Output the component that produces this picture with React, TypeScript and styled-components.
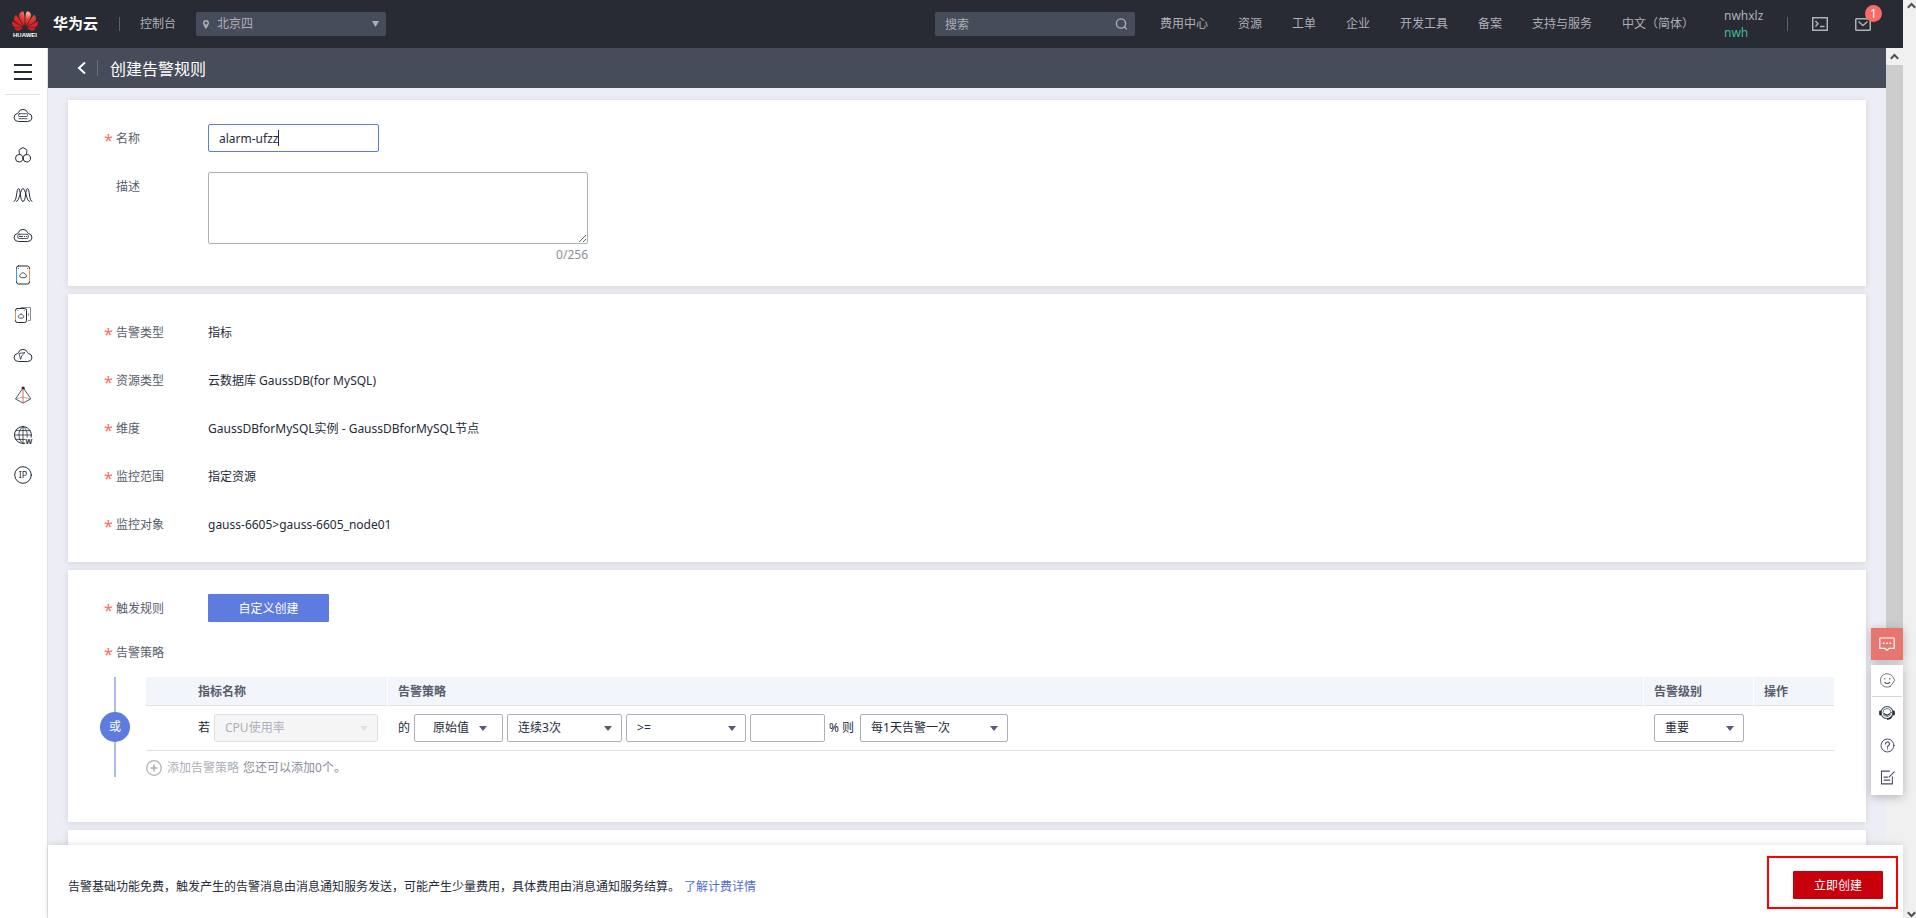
import React from "react";
import styled, { createGlobalStyle, css } from "styled-components";
import { SiHuawei } from "react-icons/si";

const GlobalStyle = createGlobalStyle`
  *, *::before, *::after { box-sizing: border-box; }
  body {
    margin: 0;
    color: #252b3a;
    font: 12px/18px "Noto Sans", "Noto Sans CJK SC", sans-serif;
  }
  button, input, select, textarea { font: inherit; color: inherit; }
  a { color: inherit; text-decoration: none; }
  svg { display: block; flex: none; }
`;

/* ---------- page frame ---------- */

const Window = styled.div`
  display: flex;
  height: 100vh;
  overflow: hidden;
`;

const Page = styled.div`
  flex: 1;
  min-width: 0;
  display: flex;
  flex-direction: column;
`;

const Body = styled.div`
  flex: 1;
  min-height: 0;
  display: flex;
`;

const Workspace = styled.div`
  flex: 1;
  min-width: 0;
  display: flex;
  flex-direction: column;
`;

const ScrollRegion = styled.div`
  flex: 1;
  min-height: 0;
  display: flex;
`;

const Content = styled.main`
  flex: 1;
  min-width: 0;
  overflow: hidden;
  background: #edeef5;
`;

const ScrollTrack = styled.div<{ $width: number }>`
  flex: none;
  width: ${(p) => p.$width}px;
  overflow: hidden;
  display: flex;
  flex-direction: column;
  align-items: flex-end;
  background: #f0f0f0;
`;

const OuterTrack = styled(ScrollTrack)`
  justify-content: space-between;
  padding-top: 2px;
`;

const ScrollArrow = styled.div`
  flex: none;
  height: 17px;
  padding: 5px 4px 0;
`;

const ScrollThumb = styled.div`
  width: 100%;
  height: 74%;
  background: #cdcdcd;
`;

const Spacer = styled.div`
  flex: 1;
`;

/* ---------- top bar ---------- */

const TopBar = styled.header`
  flex: none;
  height: 48px;
  display: flex;
  align-items: center;
  padding: 0 32px 0 12px;
  background: #282b33;
  color: #adb0b8;
`;

const Logo = styled.div`
  width: 26px;
  display: flex;
  flex-direction: column;
  align-items: center;
  padding-bottom: 4px;
`;

const LogoName = styled.span`
  height: 5px;
  margin-top: -2px;
  color: #fff;
  font: bold 6px/6px "Liberation Sans", sans-serif;
`;

const Brand = styled.strong`
  margin: 0 21px 2px 15px;
  color: #fff;
  font-size: 15px;
  line-height: 22px;
`;

const BarDivider = styled.span`
  width: 1px;
  height: 14px;
  background: #5c616e;
`;

const ConsoleLink = styled.a`
  margin: 0 20px;
`;

const DarkField = styled.label<{ $width: number }>`
  width: ${(p) => p.$width}px;
  height: 24px;
  display: flex;
  align-items: center;
  padding: 0 7px;
  border-radius: 2px;
  background: #464c59;
`;

const RegionSelect = styled.select`
  flex: 1;
  height: 24px;
  margin-left: 8px;
  padding: 0;
  border: 0;
  background: none;
  appearance: none;
  outline: none;
`;

const SearchInput = styled.input`
  flex: 1;
  min-width: 0;
  height: 24px;
  padding: 0 3px;
  border: 0;
  background: none;
  outline: none;
  &::placeholder { color: #adb0b8; opacity: 1; }
`;

const TopNav = styled.nav`
  display: flex;
  gap: 30px;
  margin: 0 30px 0 25px;
`;

const Account = styled.div`
  width: 63px;
  display: flex;
  flex-direction: column;
  line-height: 17px;
  span:last-child { color: #3dbd93; }
`;

const IconButton = styled.button`
  position: relative;
  padding: 0;
  border: 0;
  background: none;
`;

const TopActions = styled.div`
  display: flex;
  gap: 27px;
  margin-left: 24px;
`;

const Badge = styled.span`
  position: absolute;
  top: -12px;
  left: 10px;
  width: 17px;
  height: 17px;
  border-radius: 50%;
  background: #fa6b66;
  color: #fff;
  line-height: 17px;
  text-align: center;
`;

/* ---------- side bar and title bar ---------- */

const SideBar = styled.nav`
  flex: none;
  width: 48px;
  display: flex;
  flex-direction: column;
  align-items: center;
  padding-right: 2px;
  border-right: 1px solid #dfe1e6;
  background: #fff;
`;

const MenuButton = styled.button`
  width: 35px;
  height: 47px;
  display: flex;
  justify-content: center;
  padding: 15px 0 0;
  border: 0;
  border-bottom: 1px solid #dfe1e6;
  background: none;
`;

const SideLink = styled.a`
  height: 40px;
  display: flex;
  align-items: center;
`;

const TitleBar = styled.div`
  height: 40px;
  display: flex;
  align-items: center;
  padding-left: 29px;
  background: #464c59;
  color: #fff;
`;

const TitleDivider = styled.span`
  width: 1px;
  height: 16px;
  margin-left: 11px;
  background: #6b707c;
`;

const Title = styled.h1`
  margin: 0 0 0 12px;
  padding-top: 2px;
  font-size: 16px;
  font-weight: 400;
  line-height: 24px;
`;

/* ---------- form ---------- */

const Form = styled.form`
  display: flex;
  flex-direction: column;
  gap: 8px;
  padding: 12px 20px;
`;

const Card = styled.section`
  display: flex;
  flex-direction: column;
  gap: 20px;
  padding: 24px 32px;
  background: #fff;
  box-shadow: 0 1px 6px rgba(40, 43, 51, 0.14);
`;

const FieldRow = styled.div`
  display: flex;
  align-items: flex-start;
  padding-left: 4px;
`;

const labelLook = css`
  width: 104px;
  height: 28px;
  display: flex;
  padding-top: 1px;
  color: #575d6c;
  line-height: 28px;
`;

const FieldLabel = styled.label`
  ${labelLook}
`;

const FieldName = styled.span`
  ${labelLook}
`;

const Mark = styled.span`
  width: 12px;
  padding-top: 1px;
  color: #f66f6a;
  font-size: 16px;
`;

const FieldValue = styled.span`
  height: 28px;
  padding-top: 1px;
  line-height: 28px;
`;

const boxLook = css`
  height: 28px;
  border: 1px solid #adb0b8;
  border-radius: 2px;
  background: #fff;
  outline: none;
`;

const CaretField = styled.div`
  position: relative;
`;

const NameInput = styled.input`
  ${boxLook}
  display: block;
  width: 171px;
  padding: 0 10px;
  border-color: #5e7ce0;
  caret-color: transparent;
`;

const Caret = styled.span`
  position: absolute;
  top: 6px;
  left: 70px;
  width: 1px;
  height: 16px;
  background: #252b3a;
`;

const DescriptionBox = styled.div`
  width: 380px;
  display: flex;
  flex-direction: column;
`;

const Description = styled.textarea`
  ${boxLook}
  height: 72px;
  padding: 4px 10px;
  resize: both;
`;

const Counter = styled.span`
  padding-top: 2px;
  margin-bottom: -2px;
  color: #8a8e99;
  text-align: right;
`;

const PrimaryButton = styled.button<{ $tone: "blue" | "red" }>`
  width: ${(p) => (p.$tone === "blue" ? 121 : 90)}px;
  height: 28px;
  padding: 1px 0 0;
  border: 0;
  border-radius: 1px;
  background: ${(p) => (p.$tone === "blue" ? "#5e7ce0" : "#c7000b")};
  color: #fff;
`;

const PolicyTitle = styled(FieldRow)`
  margin: -4px 0 -9px;
`;

const Policy = styled.div`
  display: flex;
  gap: 16px;
  margin-bottom: 21px;
`;

const Rail = styled.div`
  flex: none;
  width: 30px;
  display: flex;
  align-items: center;
  background: linear-gradient(#adbcf0, #adbcf0) center / 2px 100% no-repeat;
`;

const RailNode = styled.span`
  width: 30px;
  border-radius: 50%;
  background: #5e7ce0;
  color: #fff;
  line-height: 30px;
  text-align: center;
`;

const PolicyMain = styled.div`
  flex: 1;
  min-width: 0;
`;

const PolicyTable = styled.table`
  width: 100%;
  table-layout: fixed;
  border-collapse: separate;
  border-spacing: 0;

  th {
    height: 29px;
    padding: 1px 0 0 10px;
    border-left: 1px solid #fff;
    border-bottom: 1px solid #dfe1e6;
    background: #f2f5fc;
    color: #575d6c;
    text-align: left;
  }
  td {
    padding: 8px 0 8px 11px;
    border-bottom: 1px solid #dfe1e6;
  }
  th:first-child {
    padding-left: 52px;
    border-left: 0;
  }
  td:first-child { padding-left: 52px; }
`;

const Col = styled.col<{ $width?: number }>`
  width: ${(p) => (p.$width ? `${p.$width}px` : "auto")};
`;

const Inline = styled.div`
  display: flex;
  align-items: center;
  gap: 4px;
`;

const Unit = styled.span`
  width: 27px;
`;

const SelectBox = styled.span<{ $width: number; $inset?: number; $disabled?: boolean }>`
  position: relative;
  width: ${(p) => p.$width}px;
  height: 28px;

  select {
    ${boxLook}
    width: 100%;
    padding: 0 20px 0 ${(p) => p.$inset ?? 10}px;
    appearance: none;
    ${(p) =>
      p.$disabled &&
      css`
        border-color: #dfe1e6;
        background: #f5f5f6;
        color: #adb0b8;
        opacity: 1;
      `}
  }
  &::after {
    content: "";
    position: absolute;
    top: 12px;
    right: ${(p) => (p.$inset ? p.$inset - 2 : 10)}px;
    border: 4px solid transparent;
    border-top: 5px solid ${(p) => (p.$disabled ? "#dfe1e6" : "#575d6c")};
    border-bottom: 0;
  }
`;

const Threshold = styled.input`
  ${boxLook}
  width: 75px;
  padding: 0 10px;
`;

const AddRow = styled.div`
  display: flex;
  align-items: center;
  padding-top: 8px;
  color: #8a8e99;
`;

const AddButton = styled.button`
  display: flex;
  align-items: center;
  gap: 5px;
  margin-right: 4px;
  padding: 0;
  border: 0;
  background: none;
  color: #adb0b8;
`;

/* ---------- footer and floating tools ---------- */

const Footer = styled.footer`
  position: relative;
  flex: none;
  height: 73px;
  display: flex;
  align-items: center;
  justify-content: space-between;
  padding: 2px 5px 0 20px;
  background: #fff;
  box-shadow: 0 -1px 6px rgba(40, 43, 51, 0.12);
`;

const Notice = styled.p`
  margin: 0;
  padding-top: 9px;
  a { margin-left: 4px; color: #526ecc; }
`;

const Highlight = styled.div`
  display: flex;
  padding: 13px 13px 8px 24px;
  border: 2px solid #f00;
`;

const FloatingTools = styled.aside`
  position: fixed;
  right: 13px;
  bottom: 123px;
  width: 32px;
  display: flex;
  flex-direction: column;
  gap: 5px;
  color: #464c59;
`;

const ToolGroup = styled.div<{ $accent?: boolean }>`
  display: flex;
  flex-direction: column;
  background: ${(p) => (p.$accent ? "#e7766f" : "#fff")};
  color: ${(p) => (p.$accent ? "#fff" : "inherit")};
  box-shadow: 0 2px 10px rgba(40, 43, 51, 0.3);
`;

const LowerTools = styled(ToolGroup)`
  padding-bottom: 2px;
`;

const Tool = styled.button<{ $ruled?: boolean }>`
  height: 32px;
  display: flex;
  align-items: center;
  justify-content: center;
  margin: 0 1px;
  padding: 0;
  border: 0;
  border-bottom: ${(p) => (p.$ruled ? "1px solid #d5d7dc" : "0")};
  background: none;
  color: inherit;
`;

/* ---------- drawings ---------- */

const Line = ({ size = 20, children }: { size?: number; children: React.ReactNode }) => (
  <svg
    width={size}
    height={size}
    viewBox="0 0 20 20"
    fill="none"
    stroke="currentColor"
    strokeWidth="1"
    strokeLinecap="round"
    strokeLinejoin="round"
    aria-hidden="true"
  >
    {children}
  </svg>
);

const Chevron = ({ down = false }: { down?: boolean }) => (
  <svg width="9" height="7" viewBox="0 0 9 7" fill="none" stroke="#505050" strokeWidth="2">
    <path d={down ? "M.8 1.2 4.5 5 8.2 1.2" : "M.8 5.8 4.5 2l3.7 3.8"} />
  </svg>
);

const cloud =
  "M5 16.500a4 4 0 0 1-.8-7.900c.6-.2.9-.4 1.100-.900A5 5 0 0 1 14.700 7.700c.2.500.5.800 1.100.900A4 4 0 0 1 15 16.500z";

const sideItems: { name: string; icon: React.ReactNode }[] = [
  {
    name: "弹性云服务器",
    icon: (
      <>
        <path d={cloud} />
        <rect x="5.5" y="8.7" width="9" height="2.8" rx="1" strokeWidth=".8" />
        <path d="M6 13.700h8" strokeWidth=".8" />
      </>
    ),
  },
  {
    name: "容器",
    icon: (
      <>
        <path d="M7.200 9.700a4 4 0 1 1 5.600 0" />
        <circle cx="6.200" cy="13.200" r="3.700" />
        <circle cx="13.800" cy="13.200" r="3.700" />
      </>
    ),
  },
  {
    name: "弹性伸缩",
    icon: (
      <>
        <path d="M1 16.500C4 16.500 3.300 3.500 5.500 3.500S7 16.500 10 16.500 12.300 3.500 14.500 3.500 16 16.500 19 16.500" />
        <path d="M3.500 16.500C6.500 16.500 7.500 3.500 10 3.500s3.500 13 6.500 13" />
      </>
    ),
  },
  {
    name: "裸金属服务器",
    icon: (
      <>
        <path d={cloud} />
        <rect x="4.700" y="9.200" width="10.600" height="4.300" rx="1.500" strokeWidth=".8" />
        <path d="M6.500 11.400h3M11.500 11.400h.2M13.300 11.400h.2" />
      </>
    ),
  },
  {
    name: "云硬盘",
    icon: (
      <>
        <rect x="3.500" y="1" width="13" height="18" rx="2" />
        <path stroke="#3d9be0" d="M3.500 4v12" />
        <path stroke="#e8964f" d="M16.500 4v12" />
        <path
          d="M7.800 12.500a1.700 1.700 0 0 1 0-3.200 2.400 2.400 0 0 1 4.500 0 1.700 1.700 0 0 1 0 3.200zM5.500 3.500h.1M14.400 3.500h.1"
          strokeWidth=".8"
        />
      </>
    ),
  },
  {
    name: "专属存储",
    icon: (
      <>
        <rect x="2.500" y="3.500" width="11" height="14" rx="1.800" />
        <path stroke="#e8964f" d="M2.500 6.500v8" />
        <path stroke="#8a8e99" d="M8 2.500h9.500v13h-2M15.500 8.500v2" />
        <path
          d="M6.200 13a1.400 1.400 0 0 1 .1-2.700 1.800 1.800 0 0 1 3.400 0 1.400 1.400 0 0 1 .1 2.700zM4.800 5.500h.1M11.200 5.500h.1"
          strokeWidth=".8"
        />
      </>
    ),
  },
  {
    name: "云服务",
    icon: (
      <>
        <path d={cloud} />
        <path d="M7.500 14 6 8.500 12 7.500 9 10.500z" strokeWidth=".8" />
      </>
    ),
  },
  {
    name: "虚拟私有云",
    icon: (
      <>
        <path d="M10 3 2.500 14 10 18l7.500-4z" strokeWidth=".8" />
        <path d="M3 14l7-2 7 2" stroke="#8a8e99" strokeWidth=".7" />
        <path d="M10 4v14" stroke="#d9703f" />
        <circle cx="10" cy="3" r="1.100" fill="currentColor" />
      </>
    ),
  },
  {
    name: "域名",
    icon: (
      <>
        <path d="M12 18.300a8.500 8.500 0 1 1 6.200-6.200" />
        <path
          d="M10 1.500v17M1.500 10h17M3 5.600h14M3 14.400h9M10 1.500C4.500 5 4.500 15 10 18.500M10 1.500c3.500 2.500 4.700 6.600 4.200 10.600"
          strokeWidth=".8"
        />
        <text x="12.500" y="18.500" fontSize="7" fontWeight="700" fill="currentColor" stroke="none">
          W
        </text>
      </>
    ),
  },
  {
    name: "弹性公网",
    icon: (
      <>
        <circle cx="10" cy="10" r="8.300" />
        <text x="10" y="13.200" fontSize="9" textAnchor="middle" fill="currentColor" stroke="none">
          IP
        </text>
      </>
    ),
  },
];

/* ---------- data ---------- */

const navLinks = ["费用中心", "资源", "工单", "企业", "开发工具", "备案", "支持与服务", "中文（简体）"];

const targetFields = [
  { label: "告警类型", value: "指标" },
  { label: "资源类型", value: "云数据库 GaussDB(for MySQL)" },
  { label: "维度", value: "GaussDBforMySQL实例 - GaussDBforMySQL节点" },
  { label: "监控范围", value: "指定资源" },
  { label: "监控对象", value: "gauss-6605>gauss-6605_node01" },
];

interface PickProps {
  label: string;
  value: string;
  width: number;
  inset?: number;
  disabled?: boolean;
}

const Pick = ({ label, value, width, inset, disabled }: PickProps) => (
  <SelectBox $width={width} $inset={inset} $disabled={disabled}>
    <select aria-label={label} disabled={disabled}>
      <option>{value}</option>
    </select>
  </SelectBox>
);

export default function App() {
  return (
    <Window>
      <GlobalStyle />
      <Page>
        <TopBar>
          <Logo>
            <svg width="0" height="0">
              <defs>
                <radialGradient id="petal" cx="0.62" cy="0.1" r="0.6">
                  <stop offset="0" stopColor="#f9b99a" />
                  <stop offset="0.5" stopColor="#e8403a" />
                  <stop offset="1" stopColor="#dc1f20" />
                </radialGradient>
              </defs>
            </svg>
            <SiHuawei size={26} fill="url(#petal)" />
            <LogoName>HUAWEI</LogoName>
          </Logo>
          <Brand>华为云</Brand>
          <BarDivider />
          <ConsoleLink href="#console">控制台</ConsoleLink>
          <DarkField $width={190}>
            <svg width="6" height="9" viewBox="0 0 6 9" fill="currentColor" fillRule="evenodd">
              <path d="M3 0a3 3 0 0 1 3 3c0 2-3 6-3 6S0 5 0 3a3 3 0 0 1 3-3zm0 1.500a1.500 1.500 0 1 0 0 3 1.500 1.500 0 0 0 0-3z" />
            </svg>
            <RegionSelect aria-label="区域">
              <option>北京四</option>
            </RegionSelect>
            <svg width="7" height="6" viewBox="0 0 7 6" fill="currentColor">
              <path d="M0 0h7L3.500 6z" />
            </svg>
          </DarkField>
          <Spacer />
          <DarkField $width={200}>
            <SearchInput type="search" placeholder="搜索" aria-label="搜索" />
            <svg width="13" height="13" viewBox="0 0 13 13" fill="none" stroke="currentColor" strokeWidth="1.4">
              <circle cx="6" cy="5.500" r="4.600" />
              <path d="m9.300 8.800 2.400 2.400" />
            </svg>
          </DarkField>
          <TopNav>
            {navLinks.map((text) => (
              <a key={text} href="#nav">
                {text}
              </a>
            ))}
          </TopNav>
          <Account>
            <span>nwhxlz</span>
            <span>nwh</span>
          </Account>
          <BarDivider />
          <TopActions>
            <IconButton type="button" aria-label="命令行">
              <svg width="16" height="14" viewBox="0 0 16 14" fill="none" stroke="currentColor" strokeWidth="1.5">
                <rect x=".75" y=".75" width="14.500" height="12.500" />
                <path d="m3.500 4 2.500 2.700L3.500 9.400M8 9.500h4.500" />
              </svg>
            </IconButton>
            <IconButton type="button" aria-label="消息">
              <svg width="16" height="14" viewBox="0 0 16 14" fill="none" stroke="currentColor" strokeWidth="1.5">
                <rect x=".75" y="1.750" width="14.500" height="11.500" rx=".8" />
                <path d="m3.500 4.500 4.500 4 4.500-4" />
              </svg>
              <Badge>1</Badge>
            </IconButton>
          </TopActions>
        </TopBar>

        <Body>
          <SideBar aria-label="服务">
            <MenuButton type="button" aria-label="菜单">
              <svg width="18" height="18" viewBox="0 0 18 18" fill="#252b3a">
                <path d="M0 1h18v2H0zM0 8h18v2H0zM0 15h18v2H0z" />
              </svg>
            </MenuButton>
            {sideItems.map((item) => (
              <SideLink key={item.name} href="#service" aria-label={item.name}>
                <Line>{item.icon}</Line>
              </SideLink>
            ))}
          </SideBar>

          <Workspace>
            <ScrollRegion>
              <Content>
                <TitleBar>
                  <IconButton type="button" aria-label="返回">
                    <svg width="9" height="14" viewBox="0 0 9 14" fill="none" stroke="#fff" strokeWidth="2">
                      <path d="M8 1.500 2 7l6 5.500" />
                    </svg>
                  </IconButton>
                  <TitleDivider />
                  <Title>创建告警规则</Title>
                </TitleBar>

                <Form>
                  <Card>
                    <FieldRow>
                      <FieldLabel htmlFor="rule-name">
                        <Mark>*</Mark>名称
                      </FieldLabel>
                      <CaretField>
                        <NameInput id="rule-name" defaultValue="alarm-ufzz" />
                        <Caret />
                      </CaretField>
                    </FieldRow>
                    <FieldRow>
                      <FieldLabel htmlFor="rule-desc">
                        <Mark />
                        描述
                      </FieldLabel>
                      <DescriptionBox>
                        <Description id="rule-desc" />
                        <Counter>0/256</Counter>
                      </DescriptionBox>
                    </FieldRow>
                  </Card>

                  <Card>
                    {targetFields.map((field) => (
                      <FieldRow key={field.label}>
                        <FieldName>
                          <Mark>*</Mark>
                          {field.label}
                        </FieldName>
                        <FieldValue>{field.value}</FieldValue>
                      </FieldRow>
                    ))}
                  </Card>

                  <Card>
                    <FieldRow>
                      <FieldName>
                        <Mark>*</Mark>触发规则
                      </FieldName>
                      <PrimaryButton type="button" $tone="blue">
                        自定义创建
                      </PrimaryButton>
                    </FieldRow>
                    <PolicyTitle>
                      <FieldName>
                        <Mark>*</Mark>告警策略
                      </FieldName>
                    </PolicyTitle>
                    <Policy>
                      <Rail>
                        <RailNode>或</RailNode>
                      </Rail>
                      <PolicyMain>
                        <PolicyTable>
                          <colgroup>
                            <Col $width={241} />
                            <Col />
                            <Col $width={110} />
                            <Col $width={81} />
                          </colgroup>
                          <thead>
                            <tr>
                              <th>指标名称</th>
                              <th>告警策略</th>
                              <th>告警级别</th>
                              <th>操作</th>
                            </tr>
                          </thead>
                          <tbody>
                            <tr>
                              <td>
                                <Inline>
                                  若
                                  <Pick label="指标名称" value="CPU使用率" width={164} disabled />
                                </Inline>
                              </td>
                              <td>
                                <Inline>
                                  的
                                  <Pick label="统计方式" value="原始值" width={89} inset={18} />
                                  <Pick label="连续次数" value="连续3次" width={115} />
                                  <Pick label="比较" value=">=" width={120} />
                                  <Threshold aria-label="阈值" />
                                  <Unit>% 则</Unit>
                                  <Pick label="告警频率" value="每1天告警一次" width={148} />
                                </Inline>
                              </td>
                              <td>
                                <Inline>
                                  <Pick label="告警级别" value="重要" width={90} />
                                </Inline>
                              </td>
                              <td />
                            </tr>
                          </tbody>
                        </PolicyTable>
                        <AddRow>
                          <AddButton type="button">
                            <svg width="16" height="16" viewBox="0 0 16 16" fill="none" stroke="currentColor">
                              <circle cx="8" cy="8" r="7.300" strokeWidth="1.300" />
                              <path d="M4.500 8h7M8 4.500v7" strokeWidth="1.600" />
                            </svg>
                            添加告警策略
                          </AddButton>
                          您还可以添加0个。
                        </AddRow>
                      </PolicyMain>
                    </Policy>
                  </Card>

                  <Card />
                </Form>
              </Content>
              <ScrollTrack $width={17}>
                <ScrollArrow>
                  <Chevron />
                </ScrollArrow>
                <ScrollThumb />
              </ScrollTrack>
            </ScrollRegion>

            <Footer>
              <Notice>
                告警基础功能免费，触发产生的告警消息由消息通知服务发送，可能产生少量费用，具体费用由消息通知服务结算。
                <a href="#billing">了解计费详情</a>
              </Notice>
              <Highlight>
                <PrimaryButton type="submit" $tone="red">
                  立即创建
                </PrimaryButton>
              </Highlight>
            </Footer>
          </Workspace>
        </Body>
      </Page>

      <OuterTrack $width={13}>
        <Chevron />
        <Chevron down />
      </OuterTrack>

      <FloatingTools aria-label="帮助工具">
        <ToolGroup $accent>
          <Tool type="button" aria-label="咨询">
            <Line size={16}>
              <path d="M1 2.500h18v13h-6.500L10 18l-2.500-2.500H1z" strokeWidth="1.5" />
              <path d="M5.500 9h.6M9.700 9h.6M13.900 9h.6" strokeWidth="2" />
            </Line>
          </Tool>
        </ToolGroup>
        <LowerTools>
          <Tool type="button" $ruled aria-label="满意度">
            <Line size={15}>
              <path d="M13.500 18A9 9 0 1 1 17 5l2.500 4.500-2.500 4-3.500 4.500z" />
              <path d="M6.500 12.500c1.500 2 5 2 6.500 0M6.500 7.500v.5M13 7.500v.5" strokeWidth="1.5" />
            </Line>
          </Tool>
          <Tool type="button" aria-label="客服">
            <Line size={16}>
              <circle cx="10" cy="9.500" r="7.500" strokeWidth="1.3" />
              <circle cx="10" cy="9.500" r="5" />
              <path d="M1.700 8.500v3M18.300 8.500v3" stroke="#252b3a" strokeWidth="3" />
              <path d="M7 11c1.500 2 4.500 2 6 0M16 14c-1 2.500-3 3.500-5.500 3.500" stroke="#252b3a" strokeWidth="1.6" />
            </Line>
          </Tool>
          <Tool type="button" aria-label="帮助">
            <Line size={15}>
              <circle cx="10" cy="10" r="8.600" strokeWidth="1.3" />
              <path d="M7.300 8a2.700 2.700 0 1 1 4 2.300c-1 .6-1.300 1-1.300 2M10 14.500v.3" strokeWidth="1.5" />
            </Line>
          </Tool>
          <Tool type="button" aria-label="反馈">
            <Line size={15}>
              <path d="M12.500 1.500H2v17h14.500V9M19 2.500 12 9.500M5.500 9.500H10M5.500 13.500H13" strokeWidth="1.4" />
            </Line>
          </Tool>
        </LowerTools>
      </FloatingTools>
    </Window>
  );
}
